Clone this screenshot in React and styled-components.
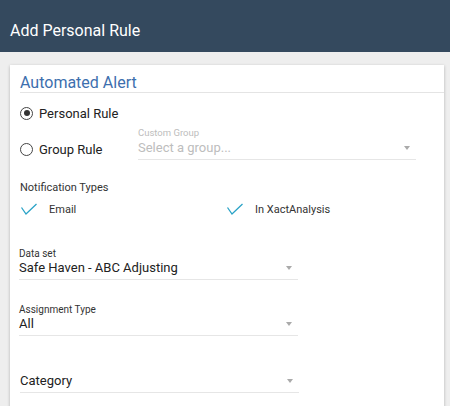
import React from 'react';
import styled, { createGlobalStyle } from 'styled-components';

const GlobalStyle = createGlobalStyle`
  html, body { margin: 0; padding: 0; background: #eeeeee; }
  body { font-family: Roboto, "Liberation Sans", sans-serif; overflow: hidden; }
  * { box-sizing: border-box; }
`;

const Page = styled.div`
  width: 450px;
  height: 406px;
  display: flex;
  flex-direction: column;
  background: #eeeeee;
  overflow: hidden;
`;

const Header = styled.div`
  height: 52px;
  background: #34495e;
  display: flex;
  align-items: center;
  padding: 8px 10px 0;
  flex-shrink: 0;
`;

const HeaderTitle = styled.h1`
  margin: 0;
  font-size: 16px;
  font-weight: 400;
  color: #ffffff;
`;

const Body = styled.div`
  padding: 13px 6px 0 10px;
  flex: 1;
`;

const Card = styled.div`
  background: #ffffff;
  box-shadow: 0 1px 3px rgba(0, 0, 0, 0.25);
  padding: 9px 0 20px 10px;
  height: 360px;
`;

const CardTitle = styled.h2`
  margin: 0;
  font-size: 16px;
  font-weight: 400;
  color: #3d6fae;
  border-bottom: 1px solid #e4e4e4;
  line-height: 18px;
`;

const RadioRow = styled.div`
  display: flex;
  align-items: ${p => (p.bottom ? 'flex-end' : 'center')};
  height: ${p => p.h}px;
  margin-top: ${p => p.mt || 0}px;
`;

const RadioLabel = styled.label`
  display: flex;
  align-items: center;
  gap: 6px;
  font-size: 13px;
  line-height: 17px;
  color: #222;
  width: 118px;
  flex-shrink: 0;
  padding-bottom: ${p => p.pb || 0}px;
`;

const RadioCircle = styled.span`
  width: 13px;
  height: 13px;
  border-radius: 50%;
  border: 1.5px solid #444;
  display: flex;
  align-items: center;
  justify-content: center;
  &::after {
    content: '';
    display: ${p => (p.checked ? 'block' : 'none')};
    width: 6px;
    height: 6px;
    border-radius: 50%;
    background: #333;
  }
`;

const Field = styled.div`
  display: flex;
  flex-direction: column;
  width: ${p => p.w}px;
  margin-top: ${p => p.mt || 0}px;
  margin-left: ${p => p.ml || 0}px;
`;

const FieldLabel = styled.div`
  font-size: ${p => (p.muted ? 9.5 : 10)}px;
  color: ${p => (p.muted ? '#bdbdbd' : '#333')};
  line-height: ${p => (p.muted ? 14 : 12)}px;
  height: ${p => (p.muted ? 14 : 12)}px;
`;

const SelectBox = styled.div`
  display: flex;
  align-items: center;
  justify-content: space-between;
  border-bottom: 1px solid #e6e6e6;
  padding: 0 6px 4px 0;
`;

const SelectValue = styled.span`
  font-size: 13px;
  color: ${p => (p.muted ? '#bdbdbd' : '#222')};
  line-height: 15px;
`;

const Caret = styled.span`
  width: 0;
  height: 0;
  border-left: 3.5px solid transparent;
  border-right: 3.5px solid transparent;
  border-top: 4px solid #aaaaaa;
`;

const SectionLabel = styled.div`
  margin-top: 21px;
  font-size: 11px;
  line-height: 14px;
  color: #333;
`;

const CheckRow = styled.div`
  display: flex;
  margin-top: 5px;
  height: 18px;
`;

const CheckItem = styled.div`
  display: flex;
  align-items: center;
  width: ${p => p.w}px;
  font-size: 11px;
  color: #333;
  gap: 12px;
`;

const Check = () => (
  <svg width="17" height="12" viewBox="0 0 17 12">
    <path d="M1.5 4.5 L6 11 L16.5 1" fill="none" stroke="#2aa3c7" strokeWidth="1.3" />
  </svg>
);

const Select = ({ label, value, muted, w, mt, ml }) => (
  <Field w={w} mt={mt} ml={ml}>
    <FieldLabel muted={muted}>{label || '\u00a0'}</FieldLabel>
    <SelectBox>
      <SelectValue muted={muted}>{value}</SelectValue>
      <Caret />
    </SelectBox>
  </Field>
);

export default function App() {
  return (
    <>
      <GlobalStyle />
      <Page>
        <Header>
          <HeaderTitle>Add Personal Rule</HeaderTitle>
        </Header>
        <Body>
          <Card>
            <CardTitle>Automated Alert</CardTitle>
            <RadioRow h={20} mt={10}>
              <RadioLabel>
                <RadioCircle checked />
                Personal Rule
              </RadioLabel>
            </RadioRow>
            <RadioRow h={34} mt={3} bottom>
              <RadioLabel pb={2}>
                <RadioCircle />
                Group Rule
              </RadioLabel>
              <Select label="Custom Group" value="Select a group..." muted w={278} />
            </RadioRow>
            <SectionLabel>Notification Types</SectionLabel>
            <CheckRow>
              <CheckItem w={206}>
                <Check />
                Email
              </CheckItem>
              <CheckItem w={200}>
                <Check />
                In XactAnalysis
              </CheckItem>
            </CheckRow>
            <Select label="Data set" value="Safe Haven - ABC Adjusting" w={279} mt={30} ml={-1} />
            <Select label="Assignment Type" value="All" w={279} mt={24} ml={-1} />
            <Select value="Category" w={279} mt={25} />
          </Card>
        </Body>
      </Page>
    </>
  );
}
